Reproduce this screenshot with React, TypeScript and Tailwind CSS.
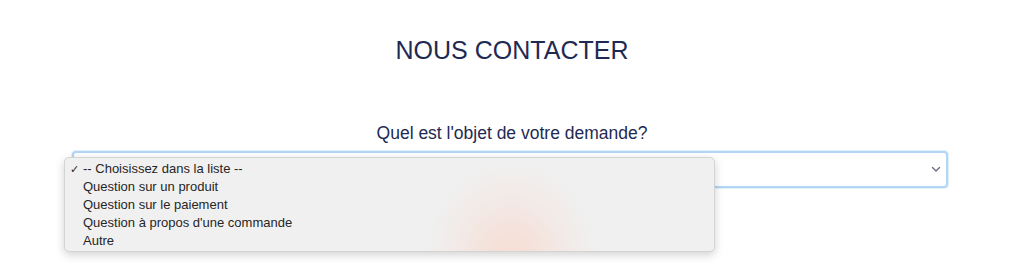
import React from "react";

export default function App() {
  const options = [
    "-- Choisissez dans la liste --",
    "Question sur un produit",
    "Question sur le paiement",
    "Question à propos d'une commande",
    "Autre",
  ];
  return (
    <div className="relative w-full h-[271px] bg-white overflow-hidden font-['Liberation_Sans',Arial,sans-serif]">
      <h1 className="pt-[35px] text-center text-[25px] leading-[30px] text-[#1f2a52] font-normal">
        NOUS CONTACTER
      </h1>
      <p className="mt-[58px] text-center text-[17.5px] leading-[21px] text-[#1f2a52]">
        Quel est l'objet de votre demande?
      </p>
      <div className="mt-[7px] ml-[72px] w-[876px] h-[37px] rounded-[4px] border-2 border-[#b3d5f6] bg-white shadow-[0_0_0_1px_#e3effb] flex items-center justify-end pr-[4px]">
        <svg width="10" height="7" viewBox="0 0 10 7" className="mr-[1px]">
          <path d="M1.5 1.5 L5 5 L8.5 1.5" fill="none" stroke="#6b6f80" strokeWidth="1.4" strokeLinecap="round" strokeLinejoin="round" />
        </svg>
      </div>

      <div className="absolute left-[64px] top-[157px] w-[651px] h-[95px] rounded-[5px] border border-[#d4d4d4] bg-[#f0f0f0] bg-[radial-gradient(ellipse_85px_95px_at_446px_100px,#f7ddd3_0%,#f5e2db_30%,#f2eae7_65%,#f0f0f0_100%)] shadow-[0_3px_10px_rgba(0,0,0,0.18)] pt-[2px]">
        {options.map((o, i) => (
          <div key={o} className="flex items-center h-[18px] text-[13px] text-[#262626]">
            <span className="w-[18px] pl-[5px] text-[11px] leading-none">{i === 0 ? "✓" : ""}</span>
            <span>{o}</span>
          </div>
        ))}
      </div>
    </div>
  );
}
